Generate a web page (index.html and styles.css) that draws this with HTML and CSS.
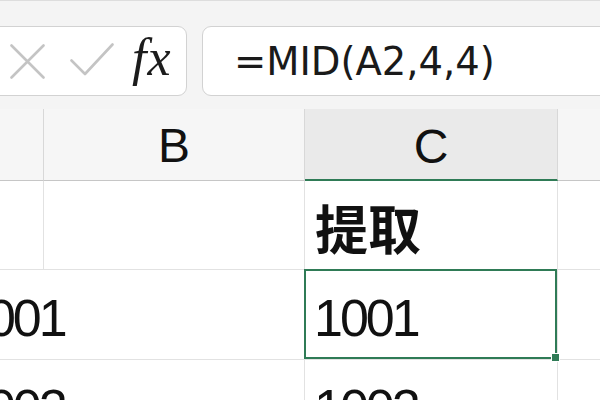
FILE: index.html
```html
<!DOCTYPE html>
<html lang="zh">
<head>
<meta charset="utf-8">
<link rel="stylesheet" href="styles.css">
</head>
<body>
<div class="app">
  <div class="toolbar">
    <div class="fx-box">
      <svg class="ico-x" width="35" height="35" viewBox="0 0 35 35">
        <path d="M1.5 1.5 L33.5 33.5 M33.5 1.5 L1.5 33.5" stroke="#c4c4c4" stroke-width="2.6" fill="none" stroke-linecap="round"/>
      </svg>
      <svg class="ico-check" width="44" height="33" viewBox="0 0 44 33">
        <path d="M1.5 17.5 L15 31 L42.5 1.5" stroke="#c4c4c4" stroke-width="2.6" fill="none" stroke-linecap="round" stroke-linejoin="round"/>
      </svg>
      <span class="fx">fx</span>
    </div>
    <div class="formula">=MID(A2,4,4)</div>
  </div>
  <div class="sheet">
    <div class="cell head a"></div>
    <div class="cell head b">B</div>
    <div class="cell head c">C</div>
    <div class="cell head d"></div>

    <div class="cell r1 a"></div>
    <div class="cell r1 b"></div>
    <div class="cell r1 c title">提取</div>
    <div class="cell r1 d"></div>

    <div class="cell r2 a over">1001</div>
    <div class="cell r2 b"></div>
    <div class="cell r2 c num selected">1001<span class="handle"></span></div>
    <div class="cell r2 d"></div>

    <div class="cell r3 a over">1002</div>
    <div class="cell r3 b"></div>
    <div class="cell r3 c num">1002</div>
    <div class="cell r3 d"></div>
  </div>
</div>
</body>
</html>
```

FILE: styles.css
```css
html, body {
  margin: 0;
  padding: 0;
  background: #ffffff;
}
body {
  width: 600px;
  height: 400px;
  overflow: hidden;
}
.app {
  width: 600px;
  height: 400px;
  overflow: hidden;
}
.toolbar {
  height: 109px;
  box-sizing: border-box;
  background: #f4f4f4;
  border-top: 1px solid #dddddd;
  padding-top: 25px;
  display: flex;
  align-items: flex-start;
}
.fx-box {
  box-sizing: border-box;
  margin-left: -20px;
  width: 207px;
  height: 70px;
  background: #ffffff;
  border: 1px solid #d2d2d2;
  border-radius: 9px;
  display: flex;
  align-items: center;
  padding-left: 29px;
}
.ico-x {
  display: block;
}
.ico-check {
  display: block;
  margin-left: 25px;
  margin-top: -3px;
}
.fx {
  font-family: "Liberation Serif", "DejaVu Serif", serif;
  font-style: italic;
  font-size: 52px;
  line-height: 1;
  color: #1c1c1c;
  margin-left: 18px;
  margin-top: -6px;
  letter-spacing: 1px;
}
.formula {
  box-sizing: border-box;
  flex: 1;
  margin-left: 15px;
  margin-right: -20px;
  height: 70px;
  background: #ffffff;
  border: 1px solid #d2d2d2;
  border-radius: 9px;
  display: flex;
  align-items: center;
  padding-left: 31px;
  font-family: "DejaVu Sans", sans-serif;
  font-size: 38.5px;
  color: #1a1a1a;
  white-space: nowrap;
}
.sheet {
  margin-left: -54px;
  width: 654px;
  display: grid;
  grid-template-columns: 98px 261px 253px 1fr;
  grid-template-rows: 72px 89px 90px 90px;
}
.cell {
  box-sizing: border-box;
  border-right: 1px solid #e2e2e2;
  border-bottom: 1px solid #e2e2e2;
  font-family: "Liberation Sans", Arial, sans-serif;
  color: #111111;
  white-space: nowrap;
  position: relative;
}
.head {
  background: #f6f6f6;
  border-right-color: #d8d8d8;
  border-bottom: 1px solid #c6c6c6;
  font-size: 48px;
  line-height: 1;
  display: flex;
  align-items: center;
  justify-content: center;
  padding-top: 3px;
}
.head.c {
  background: #eaeaea;
  border-bottom: 2px solid #2f7b56;
  padding-top: 5px;
}
.head.d {
  border-right: none;
}
.d {
  border-right: none;
}
.title {
  font-family: "Noto Sans CJK SC", "Noto Sans CJK JP", sans-serif;
  font-weight: 700;
  font-size: 53px;
  line-height: 53px;
  padding-left: 10px;
  padding-top: 20px;
}
.num, .over {
  font-size: 52px;
  line-height: 52px;
  letter-spacing: -3px;
  padding-left: 9px;
  padding-top: 22px;
}
.over {
  padding-left: 15px;
  border-right: none;
  overflow: visible;
  z-index: 1;
}
.selected::after {
  content: "";
  position: absolute;
  top: -1px;
  left: -1px;
  right: 0;
  bottom: 0;
  border: 2px solid #2f7b56;
  pointer-events: none;
}
.handle {
  position: absolute;
  right: -3px;
  bottom: -3px;
  width: 7px;
  height: 7px;
  background: #2f7b56;
  border: 1px solid #ffffff;
  z-index: 3;
}
```
